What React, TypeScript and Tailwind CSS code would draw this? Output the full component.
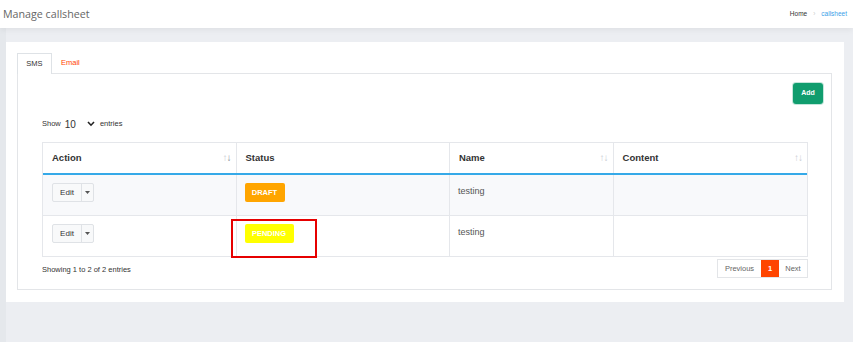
import React from "react";

function SortIcon({ active = false }: { active?: boolean }) {
  return (
    <span className="flex items-center text-[10px] leading-none tracking-[-1px]">
      <span className="text-[#c8ccd2]">↑</span>
      <span className={active ? "text-[#8a9099]" : "text-[#c8ccd2]"}>↓</span>
    </span>
  );
}

function EditButton() {
  return (
    <div className="flex h-[19px] w-[42px] rounded-[2px] border border-[#dfe2e6] bg-[#f8f9fa] text-[8px] text-[#333]">
      <div className="flex w-[28px] items-center justify-center">Edit</div>
      <div className="flex flex-1 items-center justify-center border-l border-[#dfe2e6]">
        <svg width="5" height="3" viewBox="0 0 5 3">
          <path d="M0 0 L5 0 L2.5 3 Z" fill="#555" />
        </svg>
      </div>
    </div>
  );
}

export default function App() {
  const cols = [
    { label: "Action", w: "w-[193px]", sort: true, active: true },
    { label: "Status", w: "w-[214px]", sort: false, active: false },
    { label: "Name", w: "w-[164px]", sort: true, active: false },
    { label: "Content", w: "w-[195px]", sort: true, active: false },
  ];
  return (
    <div
      className="flex h-[342px] w-[853px] flex-col overflow-hidden bg-[#eceef2]"
      style={{ fontFamily: '"Liberation Sans", Arial, sans-serif' }}
    >
      {/* header */}
      <div className="relative z-10 flex h-[28px] shrink-0 items-center justify-between bg-white pl-[3px] pr-[6px] shadow-[0_2px_6px_rgba(0,0,0,0.06)]">
        <div
          className="text-[10.7px] text-[#666]"
          style={{ fontFamily: '"Open Sans", sans-serif' }}
        >
          Manage callsheet
        </div>
        <div className="flex items-center gap-[4px] text-[6.5px]">
          <span className="text-[#333]">Home</span>
          <span className="px-[2px] text-[#ccc]">›</span>
          <span className="text-[#3ba0e8]">callsheet</span>
        </div>
      </div>

      <div className="flex flex-1">
        <div className="w-[6px] bg-[#e5e8ec]" />
        <div className="flex-1 pt-[14px] pr-[9px]">
          <div className="h-[260px] bg-white pl-[11px] pr-[12px] pt-[11px]">
            {/* tabs */}
            <div className="flex h-[20px] items-end">
              <div className="relative -mb-px flex h-[21px] w-[35px] items-center justify-center border border-b-0 border-[#dee2e6] bg-white text-[7.5px] text-[#333]">
                SMS
              </div>
              <div className="flex h-[20px] items-center pl-[9px] text-[7.5px] text-[#ff4500]">
                Email
              </div>
            </div>
            {/* tab content */}
            <div className="h-[217px] border border-[#e3e5e8] pl-[24px] pr-[23px] pt-[9px]">
              <div className="flex justify-end">
                <div className="-mr-[15px] flex h-[21px] w-[30px] items-center justify-center rounded-[3px] bg-[#109d6e] text-[7px] font-bold text-white shadow-[0_0_0_1px_rgba(16,157,110,0.25)]">
                  Add
                </div>
              </div>
              <div className="mt-[13px] flex h-[14px] items-center text-[7.5px] text-[#333]">
                <span>Show</span>
                <span className="ml-[4px] text-[10px]">10</span>
                <svg className="ml-[11px]" width="8" height="6" viewBox="0 0 8 6">
                  <path d="M1 1 L4 4.2 L7 1" stroke="#222" strokeWidth="1.6" fill="none" />
                </svg>
                <span className="ml-[5px]">entries</span>
              </div>

              {/* table */}
              <div className="relative mt-[11px] w-[766px]">
                <div className="border border-[#e5e7eb]">
                  <div className="flex h-[32px] border-b-2 border-[#35a9e8]">
                    {cols.map((c, i) => (
                      <div
                        key={c.label}
                        className={`${c.w} flex items-center justify-between pl-[9px] pr-[5px] text-[9.5px] font-bold text-[#333] ${i > 0 ? "border-l border-[#e5e7eb]" : ""}`}
                      >
                        <span>{c.label}</span>
                        {c.sort && <SortIcon active={c.active} />}
                      </div>
                    ))}
                  </div>
                  {[
                    { status: "DRAFT", bg: "bg-[#ffa500]", w: "w-[40px]", rowBg: "bg-[#f8f9fb]", h: "h-[40px]" },
                    { status: "PENDING", bg: "bg-[#ffff00]", w: "w-[49px]", rowBg: "bg-white", h: "h-[41px]" },
                  ].map((r, idx) => (
                    <div
                      key={r.status}
                      className={`flex ${r.h} ${r.rowBg} ${idx > 0 ? "border-t border-[#e5e7eb]" : ""}`}
                    >
                      <div className="w-[193px] pl-[9px] pt-[8px]">
                        <EditButton />
                      </div>
                      <div className="w-[214px] border-l border-[#e5e7eb] pl-[8px] pt-[8px]">
                        <div
                          className={`${r.bg} ${r.w} flex h-[19px] items-center justify-center rounded-[2px] text-[7.5px] font-bold text-white`}
                        >
                          {r.status}
                        </div>
                      </div>
                      <div className="w-[164px] border-l border-[#e5e7eb] pl-[8px] pt-[10px] text-[9px] text-[#555]">
                        testing
                      </div>
                      <div className="w-[195px] border-l border-[#e5e7eb]" />
                    </div>
                  ))}
                </div>
                {/* highlight box */}
                <div className="absolute left-[189px] top-[77px] h-[39px] w-[86px] border-2 border-[#e60000]" />

                <div className="mt-[2px] flex items-start justify-between">
                  <div className="pt-[5px] text-[7.5px] text-[#333]">Showing 1 to 2 of 2 entries</div>
                  <div className="flex h-[19px] border border-[#e3e5e8] text-[7.5px] text-[#666]">
                    <div className="flex w-[43px] items-center justify-center">Previous</div>
                    <div className="flex w-[18px] items-center justify-center bg-[#ff4500] font-bold text-white">
                      1
                    </div>
                    <div className="flex w-[28px] items-center justify-center">Next</div>
                  </div>
                </div>
              </div>
            </div>
          </div>
        </div>
      </div>
    </div>
  );
}
